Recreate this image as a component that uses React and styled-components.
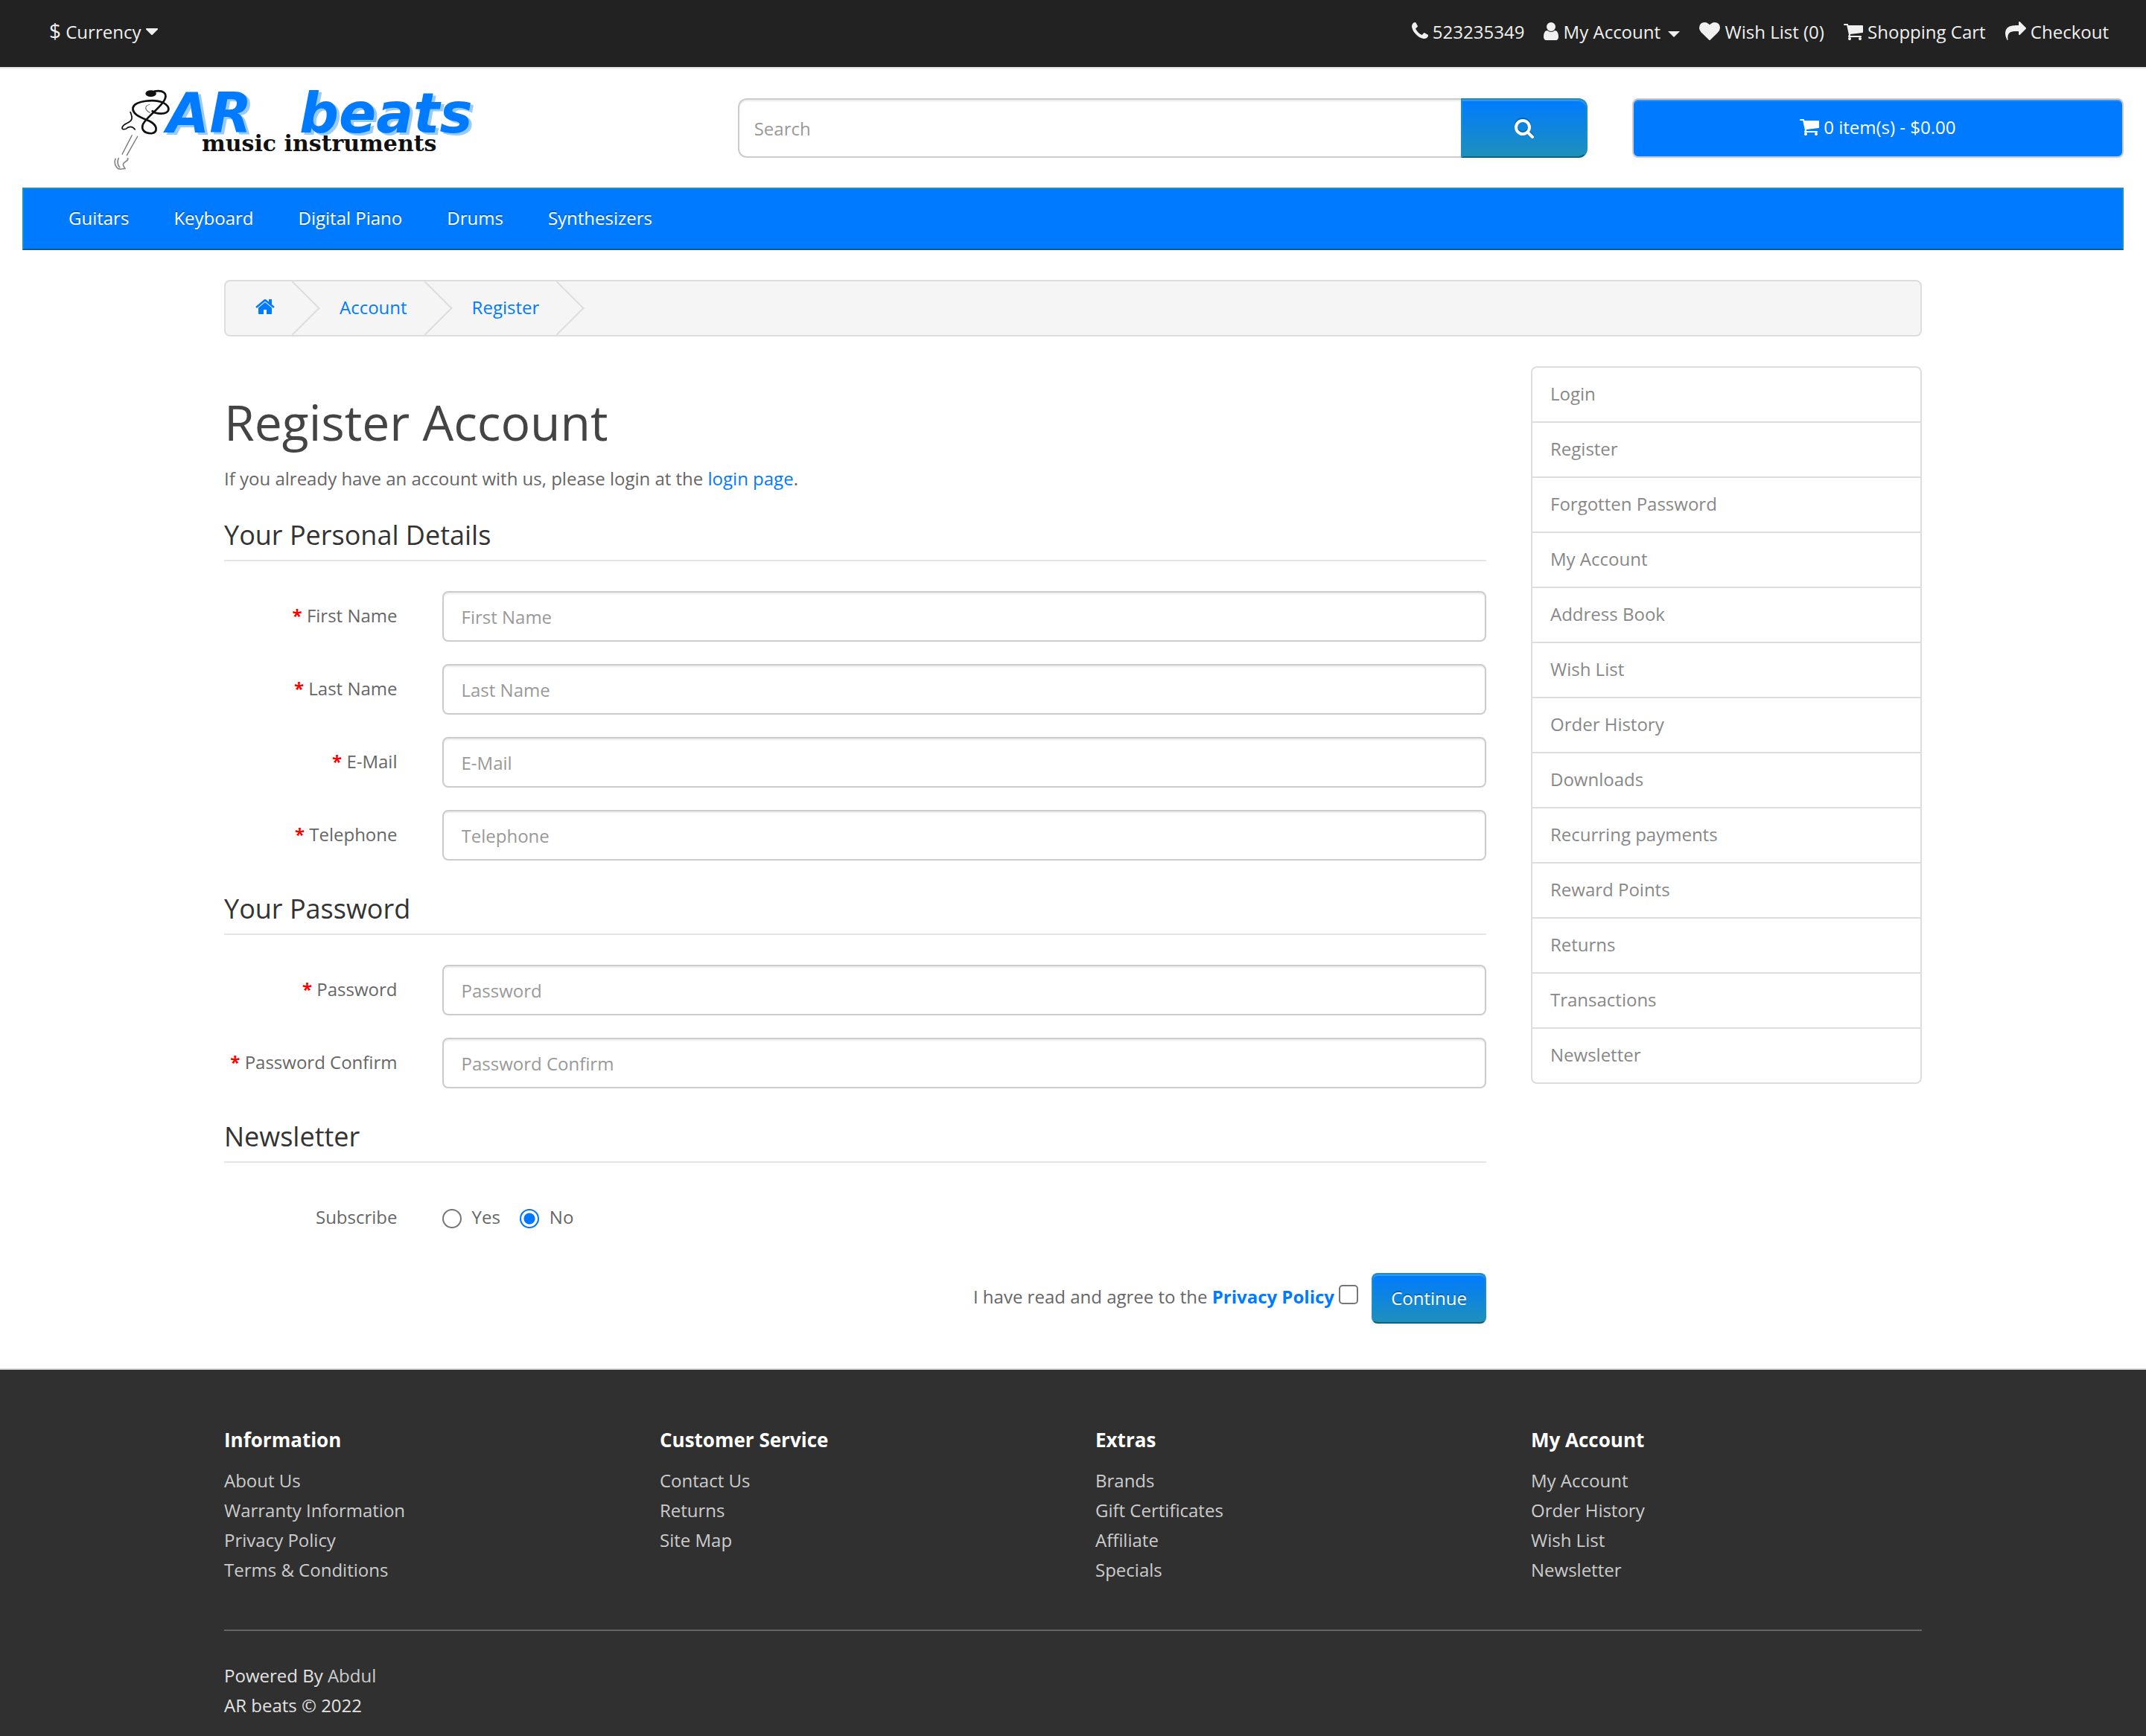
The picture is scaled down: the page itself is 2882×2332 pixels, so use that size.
import React from "react";
import styled, { createGlobalStyle, css } from "styled-components";

const blue = "#007bff";
const teal = "#1f90bb";
const tealDark = "#145e7a";

const GlobalStyle = createGlobalStyle`
  *, *::before, *::after { box-sizing: border-box; }
  body {
    margin: 0;
    background: #fff;
    color: #666;
    font-family: "Open Sans", "Noto Sans", sans-serif;
    font-size: 24px;
    line-height: 40px;
  }
  a { color: ${blue}; text-decoration: none; }
  button, input { font: inherit; }
  ul { list-style: none; margin: 0; padding: 0; }
`;

const ICONS = {
  phone: [192, 1408, "M1600 1240q0 27-10 70.5t-21 68.5q-21 50-122 106-94 51-186 51-27 0-53-3.5t-57.5-12.5-47-14.5-55.5-20.5-49-18q-98-35-175-83-127-79-264-216t-216-264q-48-77-83-175-3-9-18-49t-20.5-55.5-14.5-47-12.5-57.5-3.5-53q0-92 51-186 56-101 106-122 25-11 68.5-21t70.5-10q14 0 21 3 18 6 53 76 11 19 30 54t35 63.5 31 53.5q3 4 17.5 25t21.5 35.5 7 28.5q0 20-28.5 50t-62 55-62 53-28.5 46q0 9 5 22.5t8.5 20.5 14 24 11.5 19q76 137 174 235t235 174q2 1 19 11.5t24 14 20.5 8.5 22.5 5q18 0 46-28.5t53-62 55-62 50-28.5q14 0 28.5 7t35.5 21.5 25 17.5q25 15 53.5 31t63.5 35 54 30q70 35 76 53 3 7 3 21z"],
  user: [256, 1280, "M1536 1399q0 109-62.5 187t-150.5 78h-854q-88 0-150.5-78t-62.5-187q0-85 8.5-160.5t31.5-152 58.5-131 94-89 134.5-34.5q131 128 313 128t313-128q76 0 134.5 34.5t94 89 58.5 131 31.5 152 8.5 160.5zm-256-887q0 159-112.5 271.5t-271.5 112.5-271.5-112.5-112.5-271.5 112.5-271.5 271.5-112.5 271.5 112.5 112.5 271.5z"],
  heart: [0, 1792, "M896 1664q-26 0-44-18l-624-602q-10-8-27.5-26t-55.5-65.5-68-97.5-53.5-121-23.5-138q0-220 127-344t351-124q62 0 126.5 21.5t120 58 95.5 68.5 76 68q36-36 76-68t95.5-68.5 120-58 126.5-21.5q224 0 351 124t127 344q0 221-229 450l-623 600q-18 18-44 18z"],
  cart: [64, 1664, "M704 1536q0 52-38 90t-90 38-90-38-38-90 38-90 90-38 90 38 38 90zm896 0q0 52-38 90t-90 38-90-38-38-90 38-90 90-38 90 38 38 90zm128-1088v512q0 24-16.5 42.5t-40.5 21.5l-1044 122q13 60 13 70 0 16-24 64h920q26 0 45 19t19 45-19 45-45 19h-1024q-26 0-45-19t-19-45q0-11 8-31.5t16-36 21.5-40 15.5-29.5l-177-823h-204q-26 0-45-19t-19-45 19-45 45-19h256q16 0 28.5 6.5t19.5 15.5 13 24.5 8 26 5.5 29.5 4.5 26h1201q26 0 45 19t19 45z"],
  share: [0, 1792, "M1792 640q0 26-19 45l-512 512q-19 19-45 19t-45-19-19-45v-256h-224q-98 0-175.5 6t-154 21.5-133 42.5-105.5 69.5-80 101-48.5 138.5-17.5 181q0 55 5 123 0 6 2.5 23.5t2.5 26.5q0 15-8.5 25t-23.5 10q-16 0-28-17-7-9-13-22t-13.5-30-10.5-24q-127-285-127-451 0-199 53-333 162-403 875-403h224v-256q0-26 19-45t45-19 45 19l512 512q19 19 19 45z"],
  search: [64, 1664, "M1216 832q0-185-131.5-316.5t-316.5-131.5-316.5 131.5-131.5 316.5 131.5 316.5 316.5 131.5 316.5-131.5 131.5-316.5zm512 832q0 52-38 90t-90 38q-54 0-90-38l-343-342q-179 124-399 124-143 0-273.5-55.5t-225-150-150-225-55.5-273.5 55.5-273.5 150-225 225-150 273.5-55.5 273.5 55.5 225 150 150 225 55.5 273.5q0 220-124 399l343 343q37 37 37 90z"],
  home: [64, 1664, "M1472 992v480q0 26-19 45t-45 19h-384v-384h-256v384h-384q-26 0-45-19t-19-45v-480q0-1 .5-3t.5-3l575-474 575 474q1 2 1 6zm223-69l-62 74q-8 9-21 11h-3q-13 0-21-7l-692-577-692 577q-12 8-24 7-13-2-21-11l-62-74q-8-10-7-23.5t11-21.5l719-599q32-26 76-26t76 26l244 204v-195q0-14 9-23t23-9h192q14 0 23 9t9 23v408l219 182q10 8 11 21.5t-7 23.5z"],
  caret: [384, 1024, "M1408 704q0 26-19 45l-448 448q-19 19-45 19t-45-19l-448-448q-19-19-19-45t19-45 45-19h896q26 0 45 19t19 45z"],
};

const Glyph = styled.svg`
  height: 28px;
  vertical-align: -4px;
  fill: currentColor;
  overflow: visible;
  ${(p) => p.$shadow && css`filter: drop-shadow(0 -2px 0 rgba(0, 0, 0, 0.25));`}
`;

function Icon({ name, shadow }) {
  const [x, width, d] = ICONS[name];
  return (
    <Glyph viewBox={`${x} 0 ${width} 1792`} width={(width / 1792) * 28} $shadow={shadow} aria-hidden="true">
      <path d={d} />
    </Glyph>
  );
}

const raised = css`
  box-shadow: inset 0 2px 0 rgba(255, 255, 255, 0.2), 0 2px 4px rgba(0, 0, 0, 0.05);
`;

const primary = css`
  ${raised}
  color: #fff;
  background: linear-gradient(${blue}, ${teal});
  border: 2px solid ${teal};
  border-bottom-color: ${tealDark};
  text-shadow: 0 -2px 0 rgba(0, 0, 0, 0.25);
  cursor: pointer;
`;

/* Top bar */
const TopBar = styled.nav`
  display: flex;
  justify-content: space-between;
  padding: 23px 50px 27px 66px;
  background: #222;
  border-bottom: 2px solid #e2e2e2;
  color: #f0f0f0;
`;

const CurrencyButton = styled.button`
  padding: 0;
  border: 0;
  background: none;
  color: inherit;
  line-height: 40px;
  cursor: pointer;
`;

const CurrencySign = styled.span`
  font-size: 28px;
  line-height: 28px;
`;

const TopLinks = styled.ul`
  display: flex;
  gap: 26px;
  a { color: inherit; }
`;

const Caret = styled.span`
  display: inline-block;
  margin-left: 4px;
  vertical-align: middle;
  border: 8px solid transparent;
  border-top-color: currentColor;
  border-bottom-width: 0;
`;

/* Header */
const Header = styled.header`
  display: grid;
  grid-template-columns: repeat(12, 1fr);
  column-gap: 60px;
  align-items: center;
  padding: 10px 30px;
`;

const LogoLink = styled.a`
  grid-column: span 4;
  display: flex;
  padding-left: 110px;
`;

const SearchForm = styled.form`
  grid-column: span 5;
  display: flex;
`;

const field = css`
  border: 2px solid #ccc;
  background: #fff;
  color: #555;
  box-shadow: inset 0 2px 2px rgba(0, 0, 0, 0.075);
  outline: 0;
  &::placeholder { color: #999; opacity: 1; }
`;

const SearchInput = styled.input`
  ${field}
  flex: 1;
  min-width: 0;
  height: 80px;
  padding: 0 20px;
  border-right: 0;
  border-radius: 12px 0 0 12px;
`;

const SearchButton = styled.button`
  ${primary}
  padding: 2px 70px 0;
  border-radius: 0 12px 12px 0;
`;

const CartButton = styled.button`
  ${raised}
  grid-column: span 3;
  height: 80px;
  padding: 0 0 2px;
  border: 2px solid #ccc;
  border-radius: 8px;
  background: ${blue};
  color: #fff;
  cursor: pointer;
`;

/* Category menu */
const Menu = styled.nav`
  margin: 0 30px 40px;
  padding: 0 30px;
  background: ${blue};
  border: 2px solid ${teal};
  border-bottom-color: ${tealDark};
  ul { display: flex; }
  a {
    display: block;
    padding: 19px 30px 21px;
    color: #fff;
    text-shadow: 0 -2px 0 rgba(0, 0, 0, 0.25);
  }
`;

const Container = styled.div`
  max-width: 2340px;
  margin: 0 auto;
  padding: 0 30px;
`;

const Breadcrumb = styled.ol`
  display: flex;
  gap: 7px;
  margin: 0 0 40px;
  padding: 15px 0 17px;
  list-style: none;
  overflow: hidden;
  background: #f5f5f5;
  border: 2px solid #ddd;
  border-radius: 8px;
`;

const Crumb = styled.li`
  position: relative;
  padding: 0 40px;
  &::after {
    content: "";
    position: absolute;
    top: -5px;
    right: -10px;
    width: 52px;
    height: 52px;
    border-right: 2px solid #ddd;
    border-bottom: 2px solid #ddd;
    transform: rotate(-45deg);
  }
`;

const Columns = styled.div`
  display: grid;
  grid-template-columns: repeat(4, 1fr);
  column-gap: 60px;
  align-items: start;
`;

const Content = styled.main`
  grid-column: span 3;
`;

const Title = styled.h1`
  margin: 38px 0 21px;
  color: #444;
  font-size: 66px;
  font-weight: 400;
  line-height: 72px;
`;

const Intro = styled.p`
  margin: 0 0 21px;
`;

const Section = styled.fieldset`
  min-width: 0;
  margin: 0;
  padding: 0;
  border: 0;
`;

const Legend = styled.legend`
  display: block;
  width: 100%;
  margin-bottom: 40px;
  padding: 15px 0 13px;
  border-bottom: 2px solid #e5e5e5;
  color: #333;
  font-size: 36px;
`;

const Row = styled.div`
  display: grid;
  grid-template-columns: repeat(12, 1fr);
  column-gap: 60px;
  margin-bottom: 30px;
`;

const RowLabel = styled.label`
  grid-column: span 2;
  padding-top: 13px;
  text-align: right;
  white-space: nowrap;
  ${(p) => p.$required && css`
    &::before { content: "* "; color: #f00; font-weight: 700; }
  `}
`;

const TextInput = styled.input`
  ${field}
  grid-column: span 10;
  width: 100%;
  height: 68px;
  padding: 12px 24px;
  border-radius: 8px;
`;

const RadioGroup = styled.div`
  grid-column: span 10;
  display: flex;
  gap: 26px;
  padding: 13px 0 1px;
`;

const RadioLabel = styled.label`
  display: flex;
  align-items: center;
  gap: 14px;
`;

const Radio = styled.input`
  appearance: none;
  width: 26px;
  height: 26px;
  margin: 4px 0 0;
  border: 2px solid #767676;
  border-radius: 50%;
  background: #fff;
  &:checked {
    border-color: #0075ff;
    background: radial-gradient(circle, #0075ff 7px, #fff 8px);
  }
`;

const Actions = styled.div`
  display: flex;
  justify-content: flex-end;
  align-items: center;
  gap: 18px;
  margin: 24px 0 60px;
`;

const Agree = styled.label`
  padding-bottom: 4px;
  a { font-weight: 700; }
`;

const Checkbox = styled.input`
  appearance: none;
  width: 26px;
  height: 26px;
  margin: 0;
  vertical-align: -1px;
  border: 2px solid #767676;
  border-radius: 5px;
  background: #fff;
`;

const SubmitButton = styled.button`
  ${primary}
  height: 68px;
  padding: 0 24px;
  border-radius: 8px;
`;

const SideList = styled.ul`
  border: 2px solid #ddd;
  border-radius: 8px;
  li + li { border-top: 2px solid #ddd; }
  a {
    display: block;
    padding: 15px 24px 17px;
    color: #888;
  }
`;

/* Footer */
const Footer = styled.footer`
  padding: 80px 0 22px;
  background: #303030;
  border-top: 2px solid #ddd;
  color: #e2e2e2;
  a { color: #ccc; }
`;

const FooterTitle = styled.h5`
  margin: 0 0 20px;
  color: #fff;
  font-size: 26px;
  font-weight: 700;
  line-height: 29px;
`;

const Rule = styled.hr`
  margin: 60px 0 40px;
  border: 0;
  border-top: 2px solid #666;
`;

const Credit = styled.p`
  margin: 0;
`;

const LogoName = styled.text`
  font-family: "DejaVu Sans", sans-serif;
  font-size: 74px;
  font-weight: 700;
  font-style: italic;
  fill: ${blue};
  text-shadow: 4px 3px 0 #99caff;
`;

const LogoTag = styled.text`
  font-family: "DejaVu Serif", serif;
  font-size: 30px;
  font-weight: 700;
  fill: #111;
`;

function Logo() {
  return (
    <svg width="540" height="140" viewBox="0 2 540 140" role="img" aria-label="AR beats music instruments">
      <g fill="none" stroke="#111" strokeLinecap="round" transform="scale(0.344 0.333)">
        <ellipse cx="182" cy="77" rx="21" ry="13" fill="#111" stroke="none" />
        <path strokeWidth="8" d="M196 68C232 62 244 78 238 96C232 122 180 160 158 190C138 216 152 238 184 238C210 234 208 206 180 190C150 176 108 164 112 134C120 106 196 98 230 114C262 132 256 158 222 158C204 158 194 154 188 148" />
        <path strokeWidth="3" stroke="#555" d="M176 122C158 126 156 142 178 154" />
        <path strokeWidth="5" d="M102 152C112 176 110 186 90 196C66 208 62 226 84 220C96 208 110 208 120 222" />
        <path strokeWidth="4" stroke="#777" d="M108 246L70 322M130 250L88 326" />
        <path strokeWidth="5" stroke="#888" d="M44 340C36 360 48 382 62 382L82 380M56 338C50 350 52 366 60 374M92 338C96 352 76 350 74 362C72 370 80 372 80 380" />
      </g>
      <LogoName x="84" y="78">
        AR<tspan x="262">beats</tspan>
      </LogoName>
      <LogoTag x="131" y="103">music instruments</LogoTag>
    </svg>
  );
}

const MENU = ["Guitars", "Keyboard", "Digital Piano", "Drums", "Synthesizers"];

const PERSONAL = [
  ["firstname", "First Name", "text"],
  ["lastname", "Last Name", "text"],
  ["email", "E-Mail", "email"],
  ["telephone", "Telephone", "tel"],
];

const PASSWORDS = [
  ["password", "Password", "password"],
  ["confirm", "Password Confirm", "password"],
];

const SIDE = [
  "Login", "Register", "Forgotten Password", "My Account", "Address Book", "Wish List", "Order History",
  "Downloads", "Recurring payments", "Reward Points", "Returns", "Transactions", "Newsletter",
];

const FOOTER = [
  ["Information", ["About Us", "Warranty Information", "Privacy Policy", "Terms & Conditions"]],
  ["Customer Service", ["Contact Us", "Returns", "Site Map"]],
  ["Extras", ["Brands", "Gift Certificates", "Affiliate", "Specials"]],
  ["My Account", ["My Account", "Order History", "Wish List", "Newsletter"]],
];

function Field({ id, label, type }) {
  return (
    <Row>
      <RowLabel htmlFor={id} $required>{label}</RowLabel>
      <TextInput id={id} name={id} type={type} placeholder={label} />
    </Row>
  );
}

function LinkItems({ items }) {
  return items.map((item) => (
    <li key={item}><a href="#">{item}</a></li>
  ));
}

export default function App() {
  return (
    <>
      <GlobalStyle />
      <TopBar>
        <CurrencyButton type="button">
          <CurrencySign>$</CurrencySign> Currency <Icon name="caret" />
        </CurrencyButton>
        <TopLinks>
          <li><a href="#"><Icon name="phone" /></a> 523235349</li>
          <li><a href="#"><Icon name="user" /> My Account <Caret /></a></li>
          <li><a href="#"><Icon name="heart" /> Wish List (0)</a></li>
          <li><a href="#"><Icon name="cart" /> Shopping Cart</a></li>
          <li><a href="#"><Icon name="share" /> Checkout</a></li>
        </TopLinks>
      </TopBar>

      <Header>
        <LogoLink href="#"><Logo /></LogoLink>
        <SearchForm onSubmit={(e) => e.preventDefault()}>
          <SearchInput type="text" name="search" placeholder="Search" aria-label="Search" />
          <SearchButton type="submit" aria-label="Search"><Icon name="search" shadow /></SearchButton>
        </SearchForm>
        <CartButton type="button"><Icon name="cart" /> 0 item(s) - $0.00</CartButton>
      </Header>

      <Menu>
        <ul><LinkItems items={MENU} /></ul>
      </Menu>

      <Container>
        <Breadcrumb>
          <Crumb><a href="#" aria-label="Home"><Icon name="home" /></a></Crumb>
          <Crumb><a href="#">Account</a></Crumb>
          <Crumb><a href="#">Register</a></Crumb>
        </Breadcrumb>

        <Columns>
          <Content>
            <Title>Register Account</Title>
            <Intro>If you already have an account with us, please login at the <a href="#">login page</a>.</Intro>
            <form onSubmit={(e) => e.preventDefault()}>
              <Section>
                <Legend>Your Personal Details</Legend>
                {PERSONAL.map(([id, label, type]) => <Field key={id} id={id} label={label} type={type} />)}
              </Section>
              <Section>
                <Legend>Your Password</Legend>
                {PASSWORDS.map(([id, label, type]) => <Field key={id} id={id} label={label} type={type} />)}
              </Section>
              <Section>
                <Legend>Newsletter</Legend>
                <Row role="radiogroup" aria-labelledby="subscribe">
                  <RowLabel as="span" id="subscribe">Subscribe</RowLabel>
                  <RadioGroup>
                    <RadioLabel><Radio type="radio" name="newsletter" value="1" />Yes</RadioLabel>
                    <RadioLabel><Radio type="radio" name="newsletter" value="0" defaultChecked />No</RadioLabel>
                  </RadioGroup>
                </Row>
              </Section>
              <Actions>
                <Agree>
                  I have read and agree to the <a href="#">Privacy Policy</a> <Checkbox type="checkbox" name="agree" />
                </Agree>
                <SubmitButton type="submit">Continue</SubmitButton>
              </Actions>
            </form>
          </Content>
          <aside>
            <SideList><LinkItems items={SIDE} /></SideList>
          </aside>
        </Columns>
      </Container>

      <Footer>
        <Container>
          <Columns>
            {FOOTER.map(([title, items]) => (
              <div key={title}>
                <FooterTitle>{title}</FooterTitle>
                <ul><LinkItems items={items} /></ul>
              </div>
            ))}
          </Columns>
          <Rule />
          <Credit>Powered By <a href="#">Abdul</a></Credit>
          <Credit>AR beats © 2022</Credit>
        </Container>
      </Footer>
    </>
  );
}
